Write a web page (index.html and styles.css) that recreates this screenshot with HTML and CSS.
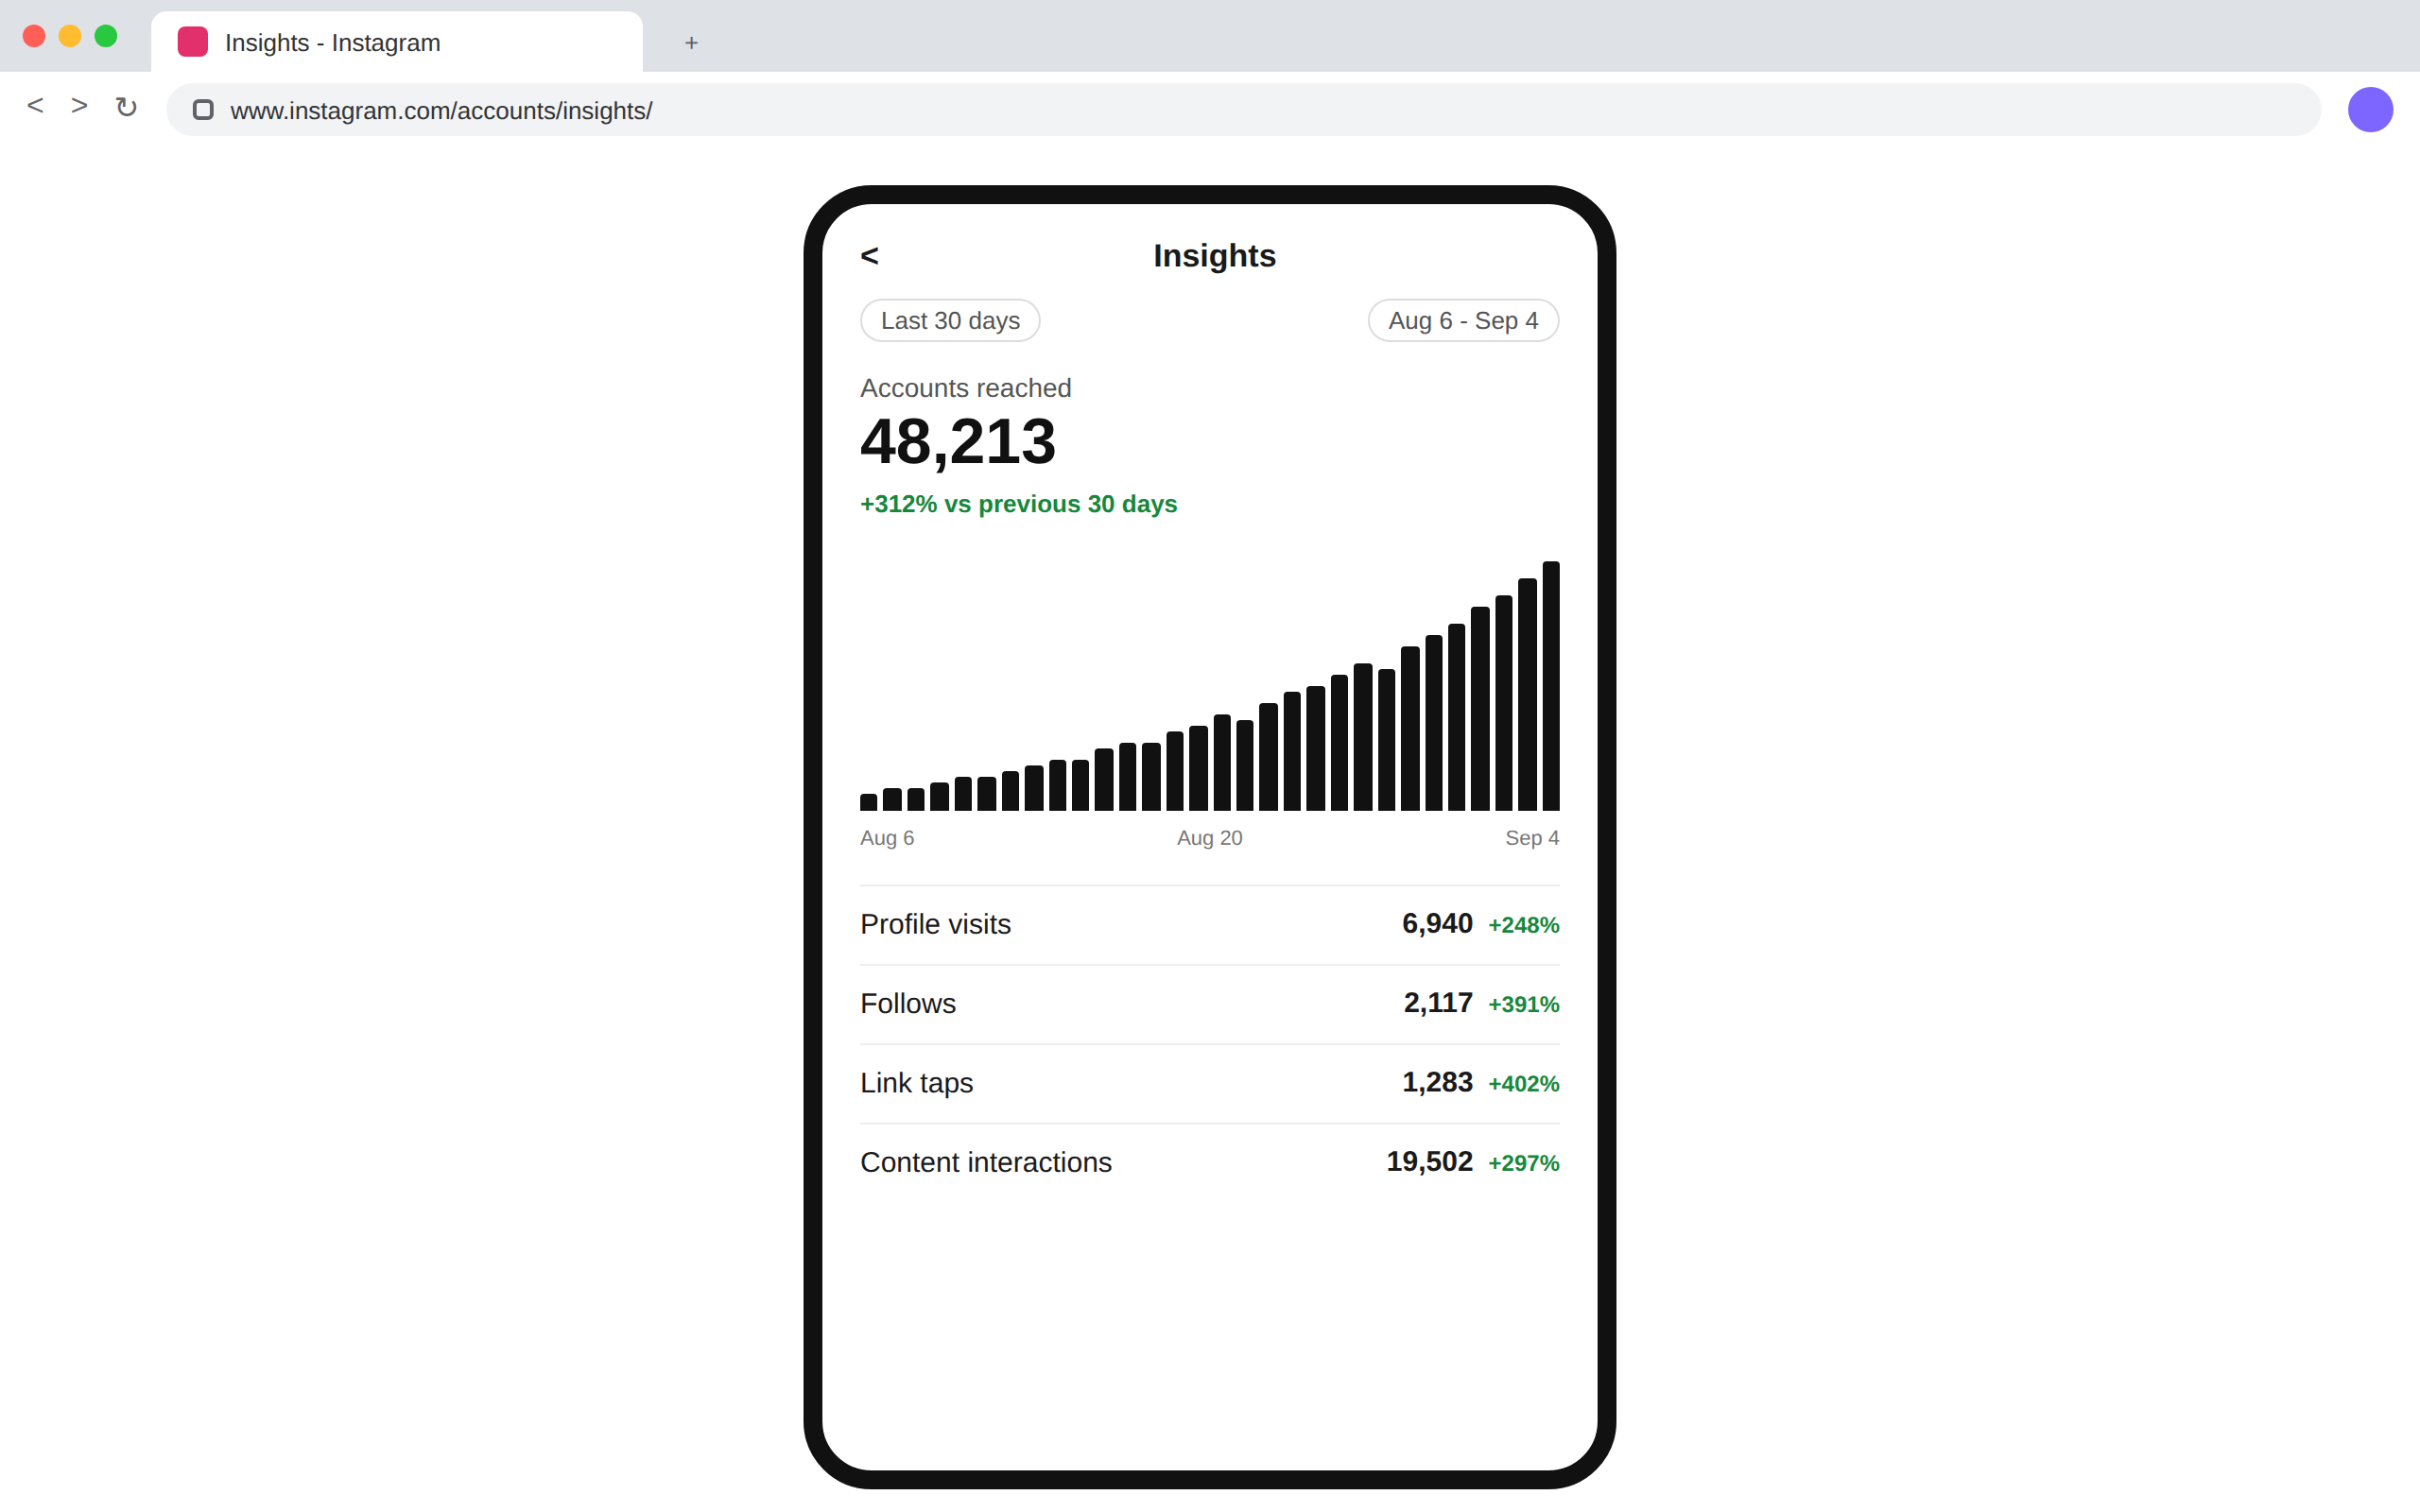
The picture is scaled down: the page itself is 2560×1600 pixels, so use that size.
FILE: index.html
```html
<!DOCTYPE html>
<html lang="en">
<head>
    <meta charset="UTF-8">
    <title>Insights - Instagram</title>
    <link rel="stylesheet" href="styles.css">
</head>
<body>

    <!-- Browser chrome -->
    <div class="tabbar">
        <div class="dots">
            <span class="dot dot-red"></span>
            <span class="dot dot-yellow"></span>
            <span class="dot dot-green"></span>
        </div>
        <div class="tab">
            <span class="favicon"></span>
            <span class="tab-title">Insights - Instagram</span>
        </div>
        <span class="new-tab">+</span>
    </div>

    <div class="toolbar">
        <div class="nav">
            <span>&lt;</span>
            <span>&gt;</span>
            <span class="reload">↻</span>
        </div>
        <div class="address">
            <span class="lock"></span>
            <span class="url">www.instagram.com/accounts/insights/</span>
        </div>
        <span class="avatar"></span>
    </div>

    <!-- Phone -->
    <div class="stage">
        <div class="phone">
            <div class="title-row">
                <span class="back">&lt;</span>
                <h1>Insights</h1>
                <span class="title-spacer"></span>
            </div>

            <div class="pills">
                <span class="pill">Last 30 days</span>
                <span class="pill">Aug 6 - Sep 4</span>
            </div>

            <p class="metric-label">Accounts reached</p>
            <p class="metric-value">48,213</p>
            <p class="metric-change">+312% vs previous 30 days</p>

            <div class="chart">
                <span class="bar" style="height: 18px"></span>
                <span class="bar wide" style="height: 24px"></span>
                <span class="bar" style="height: 24px"></span>
                <span class="bar wide" style="height: 30px"></span>
                <span class="bar" style="height: 36px"></span>
                <span class="bar wide" style="height: 36px"></span>
                <span class="bar" style="height: 42px"></span>
                <span class="bar wide" style="height: 48px"></span>
                <span class="bar" style="height: 54px"></span>
                <span class="bar" style="height: 54px"></span>
                <span class="bar wide" style="height: 66px"></span>
                <span class="bar" style="height: 72px"></span>
                <span class="bar wide" style="height: 72px"></span>
                <span class="bar" style="height: 84px"></span>
                <span class="bar wide" style="height: 90px"></span>
                <span class="bar" style="height: 102px"></span>
                <span class="bar" style="height: 96px"></span>
                <span class="bar wide" style="height: 114px"></span>
                <span class="bar" style="height: 126px"></span>
                <span class="bar wide" style="height: 132px"></span>
                <span class="bar" style="height: 144px"></span>
                <span class="bar wide" style="height: 156px"></span>
                <span class="bar" style="height: 150px"></span>
                <span class="bar wide" style="height: 174px"></span>
                <span class="bar" style="height: 186px"></span>
                <span class="bar" style="height: 198px"></span>
                <span class="bar wide" style="height: 216px"></span>
                <span class="bar" style="height: 228px"></span>
                <span class="bar wide" style="height: 246px"></span>
                <span class="bar" style="height: 264px"></span>
            </div>
            <div class="chart-labels">
                <span>Aug 6</span>
                <span>Aug 20</span>
                <span>Sep 4</span>
            </div>

            <div class="stats">
                <div class="stat-row">
                    <span class="stat-name">Profile visits</span>
                    <div class="stat-numbers">
                        <span class="stat-value">6,940</span>
                        <span class="stat-change">+248%</span>
                    </div>
                </div>
                <div class="stat-row">
                    <span class="stat-name">Follows</span>
                    <div class="stat-numbers">
                        <span class="stat-value">2,117</span>
                        <span class="stat-change">+391%</span>
                    </div>
                </div>
                <div class="stat-row">
                    <span class="stat-name">Link taps</span>
                    <div class="stat-numbers">
                        <span class="stat-value">1,283</span>
                        <span class="stat-change">+402%</span>
                    </div>
                </div>
                <div class="stat-row">
                    <span class="stat-name">Content interactions</span>
                    <div class="stat-numbers">
                        <span class="stat-value">19,502</span>
                        <span class="stat-change">+297%</span>
                    </div>
                </div>
            </div>
        </div>
    </div>

</body>
</html>
```

FILE: styles.css
```css
:root {
    --ink: #111111;
    --text: #1a1a1a;
    --muted: #555555;
    --green: #16883c;
    --chrome: #dee1e6;
    --field: #f1f3f5;
    --line: #eeeeee;
}

* {
    margin: 0;
    padding: 0;
    box-sizing: border-box;
}

body {
    font-family: "Liberation Sans", Arial, sans-serif;
    text-rendering: geometricPrecision;
    color: var(--text);
    background-color: #ffffff;
    height: 100vh;
    overflow: hidden;
}

/* Tab bar */
.tabbar {
    display: flex;
    align-items: flex-end;
    height: 76px;
    padding-left: 24px;
    background-color: var(--chrome);
}

.dots {
    display: flex;
    gap: 14px;
    align-self: flex-start;
    margin-top: 26px;
}

.dot {
    width: 24px;
    height: 24px;
    border-radius: 50%;
}

.dot-red { background-color: #ff5f57; }
.dot-yellow { background-color: #febc2e; }
.dot-green { background-color: #28c840; }

.tab {
    display: flex;
    align-items: center;
    gap: 18px;
    width: 520px;
    height: 64px;
    margin-left: 36px;
    padding: 0 28px;
    background-color: #ffffff;
    border-radius: 16px 16px 0 0;
}

.favicon {
    width: 32px;
    height: 32px;
    border-radius: 8px;
    background-color: #e1306c;
}

.tab-title {
    padding-top: 3px;
    font-size: 26px;
    color: #333333;
}

.new-tab {
    align-self: center;
    margin-left: 44px;
    margin-top: 14px;
    font-size: 26px;
    color: #5f6368;
}

/* Toolbar */
.toolbar {
    display: flex;
    align-items: center;
    height: 80px;
    padding: 0 28px;
}

.nav {
    display: flex;
    gap: 28px;
    width: 148px;
    margin-top: -7px;
    font-size: 32px;
    color: #666666;
}

.reload {
    margin-top: 2px;
    margin-left: -1px;
}

.address {
    display: flex;
    align-items: center;
    gap: 18px;
    flex: 1;
    height: 56px;
    padding-left: 28px;
    background-color: var(--field);
    border-radius: 28px;
}

.lock {
    width: 22px;
    height: 22px;
    border: 4px solid #5f6368;
    border-radius: 6px;
}

.url {
    padding-top: 2px;
    font-size: 26px;
    color: #333333;
}

.avatar {
    width: 48px;
    height: 48px;
    margin-left: 28px;
    border-radius: 50%;
    background-color: #7c66ff;
}

/* Phone */
.stage {
    display: flex;
    justify-content: center;
    padding-top: 40px;
}

.phone {
    width: 860px;
    height: 1380px;
    padding: 36px 40px;
    border: 20px solid var(--ink);
    border-radius: 72px;
    background-color: #ffffff;
}

.title-row {
    display: flex;
    justify-content: space-between;
    align-items: center;
    line-height: 39px;
}

.back {
    font-size: 34px;
    font-weight: 700;
}

.title-row h1 {
    font-size: 34px;
    font-weight: 700;
}

.title-spacer {
    width: 9px;
}

.pills {
    display: flex;
    justify-content: space-between;
    margin-top: 25px;
}

.pill {
    padding: 6px 20px;
    border: 2px solid #dddddd;
    border-radius: 23px;
    font-size: 26px;
    line-height: 30px;
    color: var(--muted);
}

.metric-label {
    margin-top: 33px;
    font-size: 28px;
    line-height: 32px;
    color: var(--muted);
}

.metric-value {
    margin-top: 1px;
    font-size: 68px;
    line-height: 78px;
    font-weight: 700;
    color: var(--ink);
}

.metric-change {
    margin-top: 12px;
    font-size: 26px;
    line-height: 30px;
    font-weight: 700;
    color: var(--green);
}

/* Chart */
.chart {
    display: flex;
    align-items: flex-end;
    gap: 6px;
    height: 264px;
    margin-top: 46px;
}

.bar {
    width: 18px;
    border-radius: 4px 4px 0 0;
    background-color: var(--ink);
}

.bar.wide {
    width: 20px;
}

.chart-labels {
    display: flex;
    justify-content: space-between;
    margin-top: 16px;
    font-size: 22px;
    line-height: 25px;
    color: #777777;
}

/* Stats */
.stats {
    margin-top: 37px;
}

.stat-row {
    display: flex;
    justify-content: space-between;
    align-items: center;
    height: 84px;
    border-top: 2px solid var(--line);
    line-height: 34px;
}

.stat-name {
    font-size: 30px;
}

.stat-numbers {
    display: flex;
    align-items: baseline;
    gap: 16px;
}

.stat-value {
    font-size: 30px;
    font-weight: 700;
}

.stat-change {
    font-size: 24px;
    font-weight: 700;
    color: var(--green);
}
```
